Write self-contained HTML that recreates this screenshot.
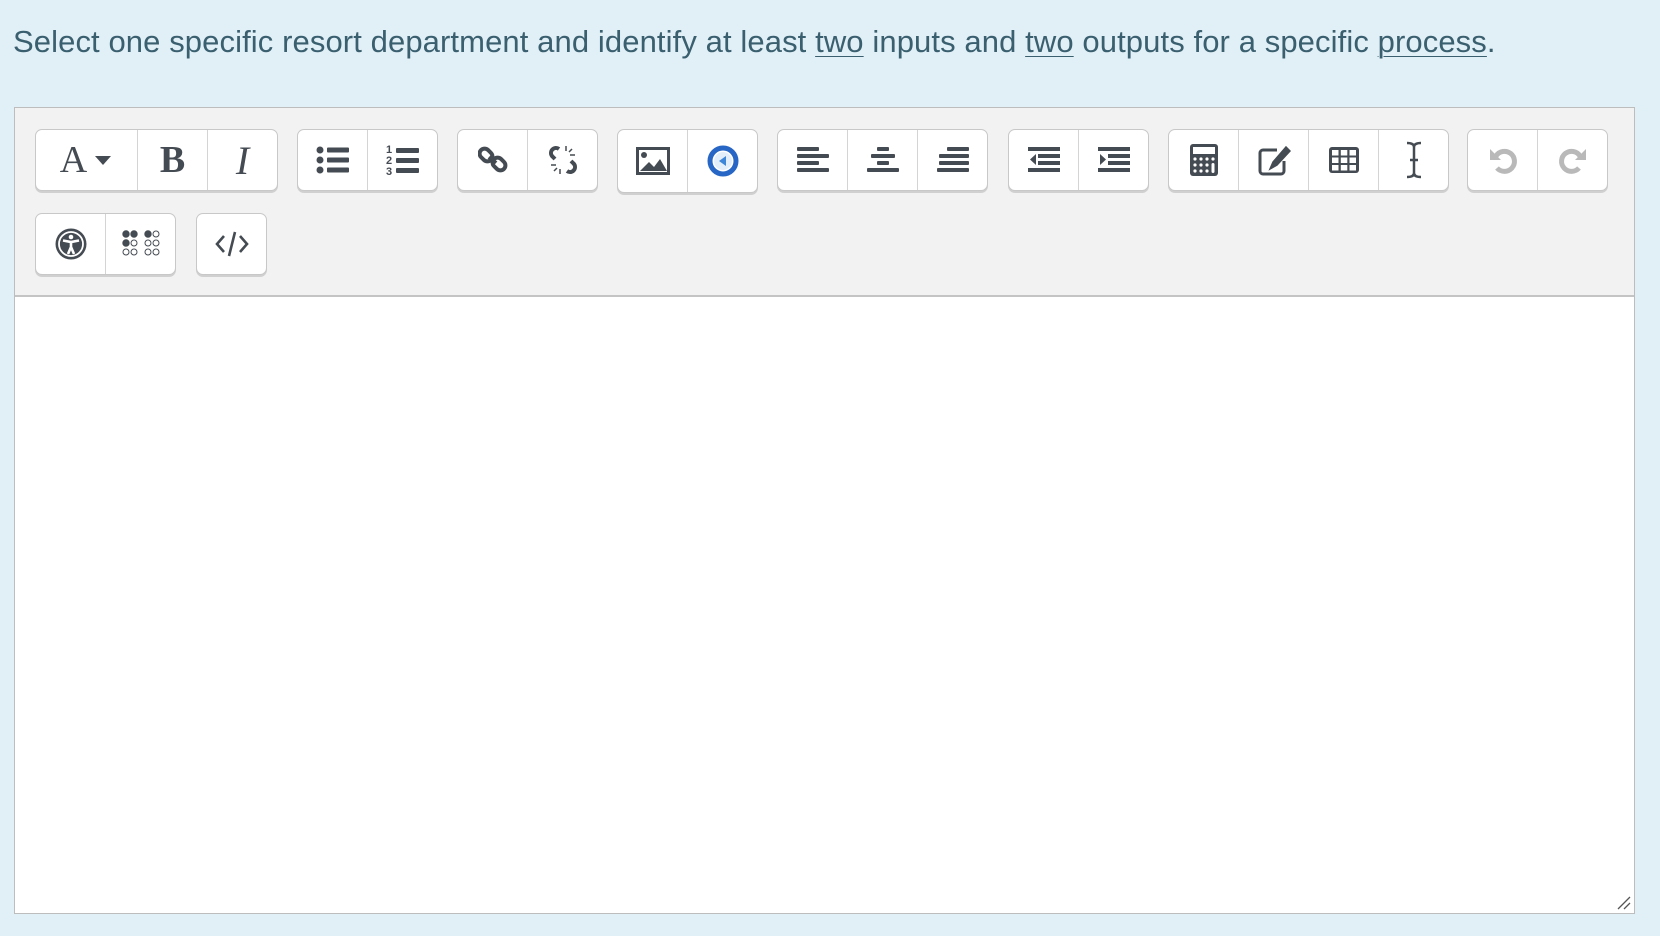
<!DOCTYPE html>
<html><head><meta charset="utf-8"><style>
body{margin:0;width:1660px;height:936px;background:#e1eff7;font-family:"Liberation Sans",sans-serif;position:relative;overflow:hidden}
.q{position:absolute;left:13px;top:24px;font-size:31px;color:#3a5f6e;white-space:nowrap;letter-spacing:0.1px}
.q u{text-decoration-thickness:1px;text-underline-offset:4px}
.ed{position:absolute;left:14px;top:107px;width:1619px;height:805px;border:1px solid #bdbdbd;background:#fff}
.tb{position:absolute;left:0;top:0;width:1619px;height:187px;background:#f2f2f2;border-bottom:2px solid #c4c4c4}
.g{position:absolute;height:60px;background:#fff;border:1px solid #c8c8c8;border-radius:7px;box-shadow:0 2px 0 #d0d0d0;display:flex;overflow:hidden}
.b{width:69px;height:60px;border-left:1px solid #d4d4d4;display:flex;align-items:center;justify-content:center;color:#454b52}
.b:first-child{border-left:none}
svg{display:block}
</style></head><body>
<div class="q">Select one specific resort department and identify at least <u>two</u> inputs and <u>two</u> outputs for a specific <u>process</u>.</div>
<div class="ed"><div class="tb">
<div class="g" style="left:20px;top:21px">
 <div class="b" style="width:101px"><span style="font-family:'Liberation Serif',serif;font-size:38px;color:#454b52">A</span><svg width="20" height="12" style="margin-left:6px"><path d="M2 2h16l-8 9z" fill="#454b52"/></svg></div>
 <div class="b"><span style="font-family:'Liberation Serif',serif;font-size:38px;font-weight:bold">B</span></div>
 <div class="b"><span style="font-family:'Liberation Serif',serif;font-size:40px;font-style:italic">I</span></div>
</div>
<div class="g" style="left:282px;top:21px">
 <div class="b"><svg width="34" height="30" fill="#454b52"><circle cx="4" cy="5" r="3.5"/><circle cx="4" cy="15" r="3.5"/><circle cx="4" cy="25" r="3.5"/><rect x="11" y="2.5" width="22" height="5" rx="1"/><rect x="11" y="12.5" width="22" height="5" rx="1"/><rect x="11" y="22.5" width="22" height="5" rx="1"/></svg></div>
 <div class="b"><svg width="34" height="34" fill="#454b52"><text x="0" y="10" font-size="11" font-weight="bold" font-family="Liberation Sans">1</text><text x="0" y="21" font-size="11" font-weight="bold" font-family="Liberation Sans">2</text><text x="0" y="32" font-size="11" font-weight="bold" font-family="Liberation Sans">3</text><rect x="10" y="5" width="23" height="5" rx="1"/><rect x="10" y="15" width="23" height="5" rx="1"/><rect x="10" y="25" width="23" height="5" rx="1"/></svg></div>
</div>
<div class="g" style="left:442px;top:21px">
 <div class="b"><svg width="30" height="30" fill="none" stroke="#454b52" stroke-width="4"><rect x="3" y="3" width="10" height="14" rx="5" transform="rotate(-45 8 10)"/><rect x="16" y="12" width="10" height="14" rx="5" transform="rotate(-45 21 19)"/><path d="M11 12l7 6"/></svg></div>
 <div class="b"><svg width="32" height="32" fill="none" stroke="#454b52" stroke-width="4"><path d="M12 5a5 5 0 0 0-7 7l3 3"/><path d="M20 27a5 5 0 0 0 7-7l-3-3"/><path d="M19 2v5M25 5l-3 3M28 11h-5M13 30v-5M7 27l3-3M4 21h5" stroke-width="1.5"/></svg></div>
</div>
<div class="g" style="left:602px;top:21px;height:62px">
 <div class="b" style="height:62px"><svg width="34" height="28"><rect x="1.5" y="1.5" width="31" height="25" fill="none" stroke="#454b52" stroke-width="3"/><circle cx="8" cy="8" r="3" fill="#454b52"/><path d="M4 24l9-9 5 5 6-8 7 12z" fill="#454b52"/></svg></div>
 <div class="b" style="height:62px"><svg width="32" height="32"><circle cx="16" cy="16" r="13" fill="none" stroke="#2766c4" stroke-width="5"/><circle cx="16" cy="16" r="9" fill="#e3eefb"/><path d="M19 11v10l-7-5z" fill="#3d86d8"/></svg></div>
</div>
<div class="g" style="left:762px;top:21px">
 <div class="b"><svg width="34" height="30" fill="#454b52"><rect x="1" y="2" width="22" height="4" rx="1"/><rect x="1" y="9" width="32" height="4" rx="1"/><rect x="1" y="16" width="22" height="4" rx="1"/><rect x="1" y="23" width="32" height="4" rx="1"/></svg></div>
 <div class="b"><svg width="34" height="30" fill="#454b52"><rect x="11" y="2" width="12" height="4" rx="1"/><rect x="5" y="9" width="24" height="4" rx="1"/><rect x="11" y="16" width="12" height="4" rx="1"/><rect x="1" y="23" width="32" height="4" rx="1"/></svg></div>
 <div class="b"><svg width="34" height="30" fill="#454b52"><rect x="11" y="2" width="22" height="4" rx="1"/><rect x="3" y="9" width="30" height="4" rx="1"/><rect x="3" y="16" width="30" height="4" rx="1"/><rect x="1" y="23" width="32" height="4" rx="1"/></svg></div>
</div>
<div class="g" style="left:993px;top:21px">
 <div class="b"><svg width="34" height="30" fill="#454b52"><rect x="1" y="2" width="32" height="4"/><rect x="11" y="9" width="22" height="4"/><rect x="11" y="16" width="22" height="4"/><rect x="1" y="23" width="32" height="4"/><path d="M9 9v11l-6-5.5z"/></svg></div>
 <div class="b"><svg width="34" height="30" fill="#454b52"><rect x="1" y="2" width="32" height="4"/><rect x="11" y="9" width="22" height="4"/><rect x="11" y="16" width="22" height="4"/><rect x="1" y="23" width="32" height="4"/><path d="M3 9v11l6-5.5z"/></svg></div>
</div>
<div class="g" style="left:1153px;top:21px">
 <div class="b"><svg width="30" height="34" fill="#454b52"><rect x="1" y="1" width="28" height="32" rx="3"/><rect x="4" y="4" width="22" height="7" fill="#fff"/><g fill="#fff"><circle cx="6" cy="16" r="1.6"/><circle cx="12" cy="16" r="1.6"/><circle cx="18" cy="16" r="1.6"/><circle cx="24" cy="16" r="1.6"/><circle cx="6" cy="22" r="1.6"/><circle cx="12" cy="22" r="1.6"/><circle cx="18" cy="22" r="1.6"/><circle cx="6" cy="28" r="1.6"/><circle cx="12" cy="28" r="1.6"/><circle cx="18" cy="28" r="1.6"/><rect x="22.5" y="20" width="3" height="10" rx="1.5"/></g></svg></div>
 <div class="b"><svg width="34" height="32" fill="none" stroke="#454b52" stroke-width="3"><path d="M20 6H6a3 3 0 0 0-3 3v18a3 3 0 0 0 3 3h18a3 3 0 0 0 3-3V17"/><path d="M29 3l-13 15-3 7 7-4 13-14z" fill="#454b52" stroke-width="1.5"/></svg></div>
 <div class="b"><svg width="30" height="26" fill="#454b52"><rect x="0" y="0" width="30" height="26" rx="3"/><g fill="#fff"><rect x="3" y="3" width="6.5" height="5.5"/><rect x="11.8" y="3" width="6.5" height="5.5"/><rect x="20.5" y="3" width="6.5" height="5.5"/><rect x="3" y="10.5" width="6.5" height="5.5"/><rect x="11.8" y="10.5" width="6.5" height="5.5"/><rect x="20.5" y="10.5" width="6.5" height="5.5"/><rect x="3" y="18" width="6.5" height="5.5"/><rect x="11.8" y="18" width="6.5" height="5.5"/><rect x="20.5" y="18" width="6.5" height="5.5"/></g></svg></div>
 <div class="b"><svg width="20" height="38" fill="none" stroke="#454b52" stroke-width="2.5"><path d="M3 2c4 0 7 1 7 4v26c0 3-3 4-7 4M17 2c-4 0-7 1-7 4v26c0 3 3 4 7 4M6 19h8"/></svg></div>
</div>
<div class="g" style="left:1452px;top:21px">
 <div class="b"><svg width="30" height="30" fill="none" stroke="#b9b9b9" stroke-width="5"><path d="M8 11a10 10 0 1 1 1 12"/><path d="M2 4v11h11z" fill="#b9b9b9" stroke="none"/></svg></div>
 <div class="b"><svg width="30" height="30" fill="none" stroke="#b9b9b9" stroke-width="5"><path d="M22 11a10 10 0 1 0-1 12"/><path d="M28 4v11h-11z" fill="#b9b9b9" stroke="none"/></svg></div>
</div>
<div class="g" style="left:20px;top:105px">
 <div class="b"><svg width="34" height="34"><circle cx="17" cy="17" r="15.5" fill="#454b52"/><circle cx="17" cy="17" r="12" fill="none" stroke="#fff" stroke-width="1.8"/><circle cx="17" cy="10" r="2.3" fill="#fff"/><path d="M9 13.5l8 1.5 8-1.5M17 15v5l-3 7M17 20l3 7" stroke="#fff" stroke-width="2.6" fill="none"/></svg></div>
 <div class="b"><svg width="40" height="28" fill="#454b52" stroke="#454b52" stroke-width="1"><circle cx="5" cy="4" r="3.2"/><circle cx="13" cy="4" r="3.2"/><circle cx="5" cy="13" r="3.2"/><circle cx="13" cy="13" r="3" fill="none"/><circle cx="5" cy="22" r="3" fill="none"/><circle cx="13" cy="22" r="3" fill="none"/><circle cx="27" cy="4" r="3.2"/><circle cx="35" cy="4" r="3" fill="none"/><circle cx="27" cy="13" r="3" fill="none"/><circle cx="35" cy="13" r="3" fill="none"/><circle cx="27" cy="22" r="3" fill="none"/><circle cx="35" cy="22" r="3" fill="none"/></svg></div>
</div>
<div class="g" style="left:181px;top:105px">
 <div class="b"><svg width="36" height="28" fill="none" stroke="#454b52" stroke-width="2.6"><path d="M10 6l-7 8 7 8M26 6l7 8-7 8M21 2l-6 24"/></svg></div>
</div>
</div>
<svg style="position:absolute;right:3px;bottom:3px" width="14" height="14" stroke="#555" stroke-width="1.3"><path d="M1 13L13 1M7 13l6-6"/></svg>
</div>
</body></html>
